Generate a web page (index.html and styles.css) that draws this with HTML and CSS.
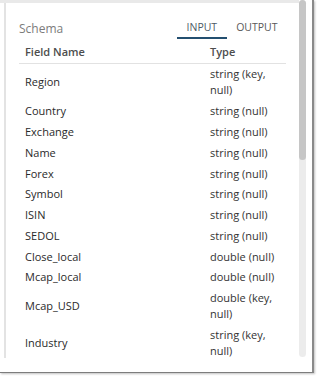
FILE: index.html
```html
<!DOCTYPE html>
<html>
<head>
<meta charset="utf-8">
<link rel="stylesheet" href="styles.css">
</head>
<body>
<div class="window">
  <div class="panel">
    <div class="pane">
      <div class="pane-inner">
        <div class="top-row">
          <div class="title">Schema</div>
          <div class="tabs">
            <div class="tab active">INPUT</div>
            <div class="tab">OUTPUT</div>
          </div>
        </div>
        <table class="schema">
          <thead>
            <tr><th class="c-name">Field Name</th><th class="c-type">Type</th></tr>
          </thead>
          <tbody>
            <tr><td>Region</td><td>string (key, null)</td></tr>
            <tr><td>Country</td><td>string (null)</td></tr>
            <tr><td>Exchange</td><td>string (null)</td></tr>
            <tr><td>Name</td><td>string (null)</td></tr>
            <tr><td>Forex</td><td>string (null)</td></tr>
            <tr><td>Symbol</td><td>string (null)</td></tr>
            <tr><td>ISIN</td><td>string (null)</td></tr>
            <tr><td>SEDOL</td><td>string (null)</td></tr>
            <tr><td>Close_local</td><td>double (null)</td></tr>
            <tr><td>Mcap_local</td><td>double (null)</td></tr>
            <tr><td>Mcap_USD</td><td>double (key, null)</td></tr>
            <tr><td>Industry</td><td>string (key, null)</td></tr>
          </tbody>
        </table>
      </div>
    </div>
    <div class="scrollbar"><div class="thumb"></div></div>
  </div>
</div>
</body>
</html>
```

FILE: styles.css
```css
html, body {
  margin: 0;
  padding: 0;
  background: #ffffff;
}
body {
  width: 317px;
  height: 377px;
  overflow: hidden;
  font-family: "Open Sans", "Noto Sans", sans-serif;
}
.window {
  width: 312px;
  height: 372px;
  border-right: 2px solid #8a8a8a;
  border-bottom: 1px solid #7d7d7d;
  box-shadow: 1px 1px 2px rgba(0, 0, 0, 0.25);
  background: #fff;
}
.panel {
  display: flex;
  align-items: flex-start;
}
.pane {
  width: 299px;
  border-top: 3px solid #e9e9e9;
}
.pane-inner {
  margin-left: 4px;
  border-left: 2px solid #e3e3e3;
  height: 355px;
  overflow: hidden;
  padding: 0 13px 0 13px;
}
.top-row {
  height: 36px;
  display: flex;
  align-items: flex-end;
  justify-content: space-between;
}
.title {
  font-size: 12px;
  line-height: 17px;
  color: #7c7c7c;
  padding-bottom: 2.5px;
}
.tabs {
  display: flex;
  margin-right: -1px;
}
.tab {
  font-size: 10.5px;
  line-height: 15px;
  color: #595959;
  padding: 5px 9.5px 2px;
  border-bottom: 2px solid transparent;
}
.tab.active {
  color: #4d5a66;
  border-bottom-color: #234f70;
}
.schema {
  width: 267px;
  border-collapse: collapse;
  font-size: 11px;
}
.schema th {
  font-weight: 600;
  color: #4d4d4d;
  text-align: left;
  height: 24px;
  padding: 0 6px;
  line-height: 15px;
  border-bottom: 1px solid #e2e2e2;
}
.schema .c-name {
  width: 173px;
}
.schema td {
  padding: 2.4px 8px 2.4px 6px;
  line-height: 16px;
  vertical-align: middle;
  color: #333;
}
.schema td:first-child {
  color: #2a2a2a;
}
.scrollbar {
  width: 7px;
  height: 357px;
  margin-top: 0;
  background: #ececec;
  border-radius: 4px;
}
.thumb {
  height: 160px;
  background: #c6c6c6;
  border-radius: 4px;
}
```
